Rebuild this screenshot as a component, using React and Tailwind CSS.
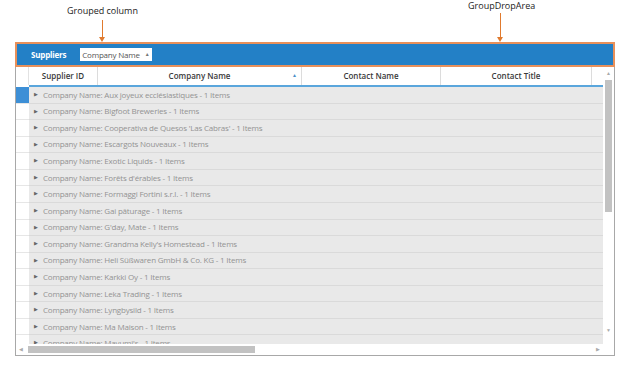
const ROWS = [
  'Aux joyeux ecclésiastiques',
  'Bigfoot Breweries',
  "Cooperativa de Quesos 'Las Cabras'",
  'Escargots Nouveaux',
  'Exotic Liquids',
  "Forêts d'érables",
  'Formaggi Fortini s.r.l.',
  'Gai pâturage',
  "G'day, Mate",
  "Grandma Kelly's Homestead",
  'Heli Süßwaren GmbH & Co. KG',
  'Karkki Oy',
  'Leka Trading',
  'Lyngbysild',
  'Ma Maison',
  "Mayumi's",
]

const COLS = [
  { label: 'Supplier ID', w: 'w-[69px]' },
  { label: 'Company Name', w: 'w-[204px]', sort: true },
  { label: 'Contact Name', w: 'w-[139px]' },
  { label: 'Contact Title', w: 'w-[151px]' },
]

export default function App() {
  return (
    <div className="relative w-[624px] h-[366px] bg-white overflow-hidden font-['Open_Sans',sans-serif]">
      {/* Annotations */}
      <div className="absolute left-[67px] top-[4px] text-[9px] text-[#222]">Grouped column</div>
      <div className="absolute left-[102px] top-[20px] w-px h-[20px] bg-[#e07a2e]" />
      <div className="absolute left-[99px] top-[37px] w-0 h-0 border-l-[3px] border-r-[3px] border-t-[5px] border-l-transparent border-r-transparent border-t-[#e07a2e]" />
      <div className="absolute left-[468px] top-0 text-[9px] leading-[11px] text-[#222]">GroupDropArea</div>
      <div className="absolute left-[500px] top-[13px] w-px h-[27px] bg-[#e07a2e]" />
      <div className="absolute left-[497px] top-[37px] w-0 h-0 border-l-[3px] border-r-[3px] border-t-[5px] border-l-transparent border-r-transparent border-t-[#e07a2e]" />

      <div className="pt-[42px] pl-[15px]">
        <div className="w-[600px] h-[314px] border border-[#a8a8a8] flex flex-col">
          {/* Group drop area */}
          <div className="h-[25px] border-2 border-[#e8905a] -mt-px -mx-px bg-[#2380c6] flex items-center pl-[14px] gap-[14px]">
            <span className="text-[8px] font-bold text-white tracking-tight">Suppliers</span>
            <div className="h-[13px] bg-white flex items-center px-[2px] gap-[5px]">
              <span className="text-[8px] text-[#555] tracking-tight">Company Name</span>
              <span className="text-[5px] text-[#777]">▲</span>
            </div>
          </div>

          <div className="flex flex-1 min-h-0">
            <div className="flex-1 flex flex-col min-w-0">
              {/* Header */}
              <div className="flex h-[18px] shrink-0">
                <div className="w-[13px] border-r border-[#e2e2e2]" />
                {COLS.map(c => (
                  <div key={c.label} className={`${c.w} shrink-0 relative flex items-center justify-center border-r border-[#dcdcdc] text-[8px] font-semibold text-[#3a3a3a]`}>
                    {c.label}
                    {c.sort && <span className="absolute right-[4px] top-[5px] text-[5px] text-[#4a8fc8]">▲</span>}
                  </div>
                ))}
                <div className="flex-1" />
              </div>
              {/* Rows */}
              <div className="flex-1 flex min-h-0 overflow-hidden">
                <div className="w-[13px] shrink-0 flex flex-col pt-[2px]">
                  {ROWS.map((r, i) => (
                    <div key={r} className={`h-[16.57px] shrink-0 border-b border-[#e6e6e6] ${i === 0 ? 'bg-[#3d8fd6]' : 'bg-white'}`} />
                  ))}
                </div>
                <div className="flex-1 flex flex-col border-t-2 border-[#5aa6dc]">
                  {ROWS.map(r => (
                    <div key={r} className="h-[16.57px] shrink-0 bg-[#e9e9e9] border-b border-[#dadada] flex items-center">
                      <span className="w-[14px] pl-[5px] text-[5px] text-[#666]">▶</span>
                      <span className="text-[8px] text-[#939393] whitespace-nowrap tracking-tight">Company Name: {r} - 1 Items</span>
                    </div>
                  ))}
                </div>
              </div>
            </div>
            {/* Vertical scrollbar */}
            <div className="w-[11px] shrink-0 flex flex-col items-center pb-[10px]">
              <span className="text-[5px] text-[#aaa] mt-[3px]">▲</span>
              <div className="w-[7px] h-[132px] bg-[#c2c2c2] mt-[2px]" />
              <div className="flex-1" />
              <span className="text-[5px] text-[#aaa]">▼</span>
            </div>
          </div>

          {/* Horizontal scrollbar */}
          <div className="h-[11px] shrink-0 flex items-center pl-[3px] pr-[14px] bg-white">
            <span className="text-[5px] text-[#aaa]">◀</span>
            <div className="ml-[5px] w-[227px] h-[7px] bg-[#c2c2c2]" />
            <div className="flex-1" />
            <span className="text-[5px] text-[#aaa]">▶</span>
          </div>
        </div>
      </div>
    </div>
  )
}
